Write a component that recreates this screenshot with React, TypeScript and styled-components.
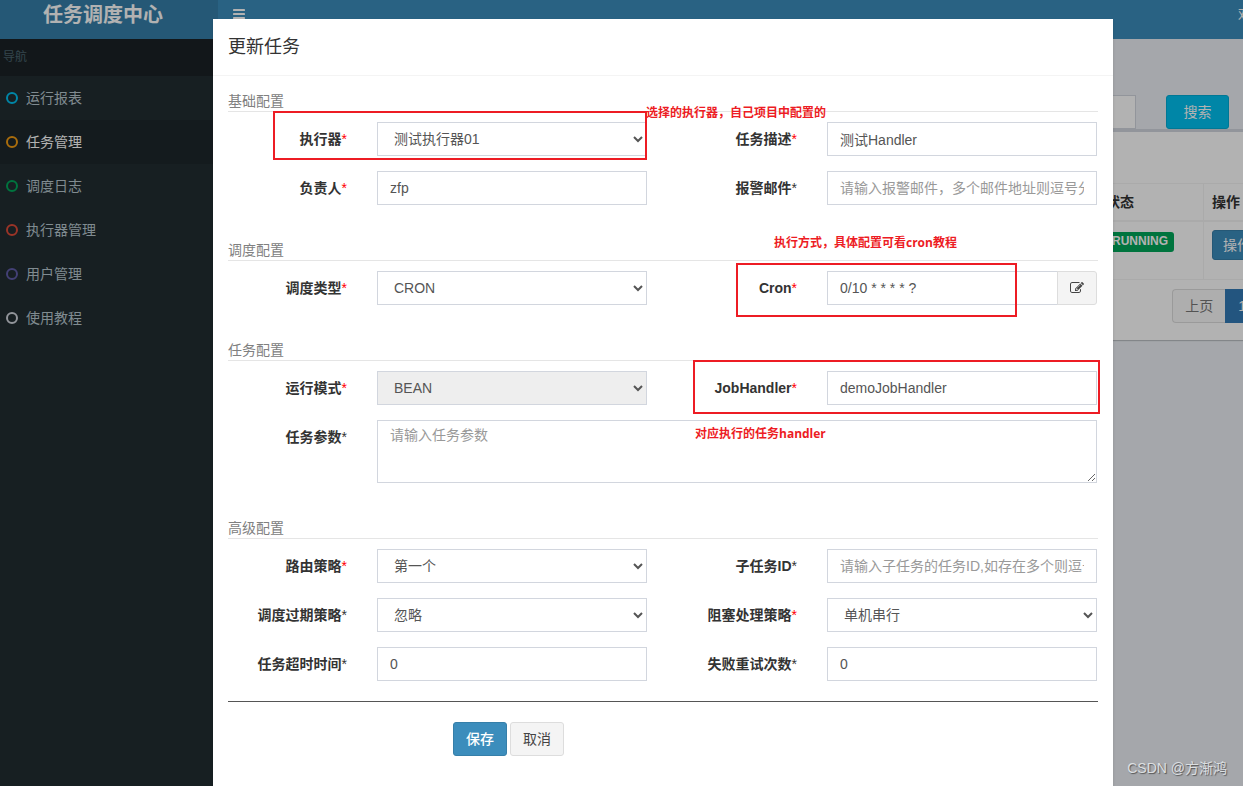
import React from "react";
import styled, { createGlobalStyle } from "styled-components";

const GlobalStyle = createGlobalStyle`
  *, *::before, *::after { box-sizing: border-box; }
  body {
    margin: 0;
    font-family: "Liberation Sans", "Noto Sans CJK SC", sans-serif;
    font-size: 14px;
    line-height: 20px;
    color: #333;
  }
  button, input, select, textarea { font: inherit; margin: 0; }
  a { text-decoration: none; }
`;

/* ---------- page behind the dialog ---------- */

const Viewport = styled.div`
  position: relative;
  height: 100vh;
  overflow: hidden;
`;

const Shell = styled.div`
  display: grid;
  grid-template-columns: 218px 1fr;
  grid-template-rows: 39px 1fr;
  width: calc(100% + 95px);
  height: 100%;
`;

const Logo = styled.a`
  padding-right: 12px;
  background: #367fa9;
  color: #fff;
  font-size: 20px;
  font-weight: 700;
  line-height: 30px;
  text-align: center;
`;

const Topbar = styled.header`
  display: flex;
  align-items: center;
  justify-content: space-between;
  padding: 0 72px 11px 15px;
  background: #3c8dbc;
`;

const Toggle = styled.button`
  display: flex;
  padding: 0;
  border: 0;
  background: none;
  color: #fff;
`;

const UserLink = styled.a`
  color: #fff;
`;

const Sidebar = styled.nav`
  background: #222d32;
`;

const NavHeading = styled.div`
  height: 37px;
  padding: 8px 3px;
  background: #1a2226;
  color: #4b646f;
  font-size: 12px;
`;

const NavLink = styled.a<{ $active?: boolean }>`
  display: flex;
  align-items: center;
  gap: 8px;
  height: 44px;
  padding-left: 6px;
  background: ${(p) => (p.$active ? "#1e282c" : "transparent")};
  color: ${(p) => (p.$active ? "#fff" : "#b8c7ce")};
`;

const Ring = styled.span<{ $color: string }>`
  width: 12px;
  height: 12px;
  border: 2px solid ${(p) => p.$color};
  border-radius: 50%;
`;

const Content = styled.main`
  padding: 56px 15px 0;
  background: #ecf0f5;
`;

const Filters = styled.div`
  display: flex;
  justify-content: flex-end;
  gap: 30px;
  padding-right: 94px;
`;

const FilterInput = styled.input`
  width: 160px;
  height: 34px;
  border: 1px solid #d2d6de;
  background: #fff;
`;

const SearchButton = styled.button`
  width: 63px;
  height: 34px;
  border: 1px solid #00acd6;
  border-radius: 3px;
  background: #00c0ef;
  color: #fff;
`;

const Box = styled.section`
  padding: 51px 10px 17px;
  border-top: 3px solid #d2d6de;
  background: #fff;
  box-shadow: 0 1px 1px rgba(0, 0, 0, 0.2);
`;

const JobTable = styled.table`
  width: 100%;
  table-layout: fixed;
  border-collapse: collapse;

  th, td {
    padding: 8px;
    border: 1px solid #f4f4f4;
    text-align: left;
    vertical-align: top;
  }
  th { height: 37px; border-bottom-width: 2px; color: #333; }
  td { height: 58px; }
`;

const StatusCol = styled.col`
  width: 106px;
`;

const ActionCol = styled.col`
  width: 109px;
`;

const StatusTag = styled.span`
  display: inline-block;
  height: 20px;
  padding: 0 6px;
  margin-top: 2px;
  border-radius: 3px;
  background: #00a65a;
  color: #fff;
  font-size: 12px;
  font-weight: 700;
  line-height: 18px;
`;

const ActionButton = styled.button`
  height: 30px;
  padding: 0 10px;
  border: 1px solid #367fa9;
  border-radius: 3px;
  background: #3c8dbc;
  color: #fff;
`;

const Pager = styled.div`
  display: flex;
  justify-content: flex-end;
  padding: 9px 54px 0 0;
`;

const PageLink = styled.a<{ $current?: boolean }>`
  height: 34px;
  padding: 6px 12px;
  border: 1px solid ${(p) => (p.$current ? "#337ab7" : "#ddd")};
  border-right-width: ${(p) => (p.$current ? "1px" : "0")};
  border-radius: ${(p) => (p.$current ? "0" : "4px 0 0 4px")};
  background: ${(p) => (p.$current ? "#337ab7" : "#fafafa")};
  color: ${(p) => (p.$current ? "#fff" : "#777")};
`;

/* ---------- dialog ---------- */

const Backdrop = styled.div`
  position: absolute;
  inset: 0;
  display: flex;
  justify-content: center;
  padding: 19px 0 0 83px;
  background: rgba(0, 0, 0, 0.3);
`;

const Dialog = styled.div`
  position: relative;
  flex: 0 1 900px;
  background: #fff;
  box-shadow: 0 2px 3px rgba(0, 0, 0, 0.125);
`;

const DialogHeader = styled.header`
  padding: 15px;
  border-bottom: 1px solid #f4f4f4;
`;

const DialogTitle = styled.h4`
  margin: 0;
  font-size: 18px;
  font-weight: 400;
  line-height: 26px;
`;

const Form = styled.form`
  padding: 15px;
`;

const Section = styled.fieldset`
  min-width: 0;
  margin: 0 0 35px;
  padding: 0;
  border: 0;
`;

const SectionTitle = styled.legend`
  width: 100%;
  margin-bottom: 10px;
  padding: 0;
  border-bottom: 1px solid #e5e5e5;
  color: #808080;
`;

const Fields = styled.div`
  display: grid;
  grid-template-columns: 1fr 2fr 1fr 2fr;
  row-gap: 15px;
  margin: 0 -14px 0 -16px;
`;

const Label = styled.label`
  padding: 7px 15px 0;
  font-weight: 700;
  text-align: right;
  white-space: nowrap;
`;

const Star = styled.span<{ $required?: boolean }>`
  color: ${(p) => (p.$required ? "#f00" : "inherit")};
  font-weight: 400;
`;

const Cell = styled.div<{ $wide?: boolean }>`
  display: flex;
  min-width: 0;
  padding: 0 15px;
  grid-column: ${(p) => (p.$wide ? "span 3" : "auto")};
`;

const controlStyle = `
  flex: 1;
  min-width: 0;
  height: 34px;
  padding: 6px 12px;
  border: 1px solid #d2d6de;
  border-radius: 0;
  background: #fff;
  color: #555;
  outline: 0;
`;

const TextInput = styled.input`
  ${controlStyle}
  &::placeholder { color: #999; }
`;

const Select = styled.select`
  ${controlStyle}
  &:disabled { background: #eee; opacity: 1; }
`;

const TextArea = styled.textarea`
  ${controlStyle}
  height: 63px;
  padding: 4px 12px;
  &::placeholder { color: #999; }
`;

const EditButton = styled.button`
  display: flex;
  align-items: center;
  justify-content: center;
  width: 40px;
  margin-left: -1px;
  border: 1px solid #ddd;
  border-radius: 0 3px 3px 0;
  background: #f4f4f4;
  color: #444;
`;

const Divider = styled.hr`
  margin: -15px 0 20px;
  border: 0;
  border-top: 1px solid #555;
`;

const Actions = styled.div`
  display: flex;
  gap: 3px;
  padding-left: 225px;
`;

const Button = styled.button<{ $primary?: boolean }>`
  width: 54px;
  height: 34px;
  padding: 0;
  border: 1px solid ${(p) => (p.$primary ? "#367fa9" : "#ddd")};
  border-radius: 3px;
  background: ${(p) => (p.$primary ? "#3c8dbc" : "#f4f4f4")};
  color: ${(p) => (p.$primary ? "#fff" : "#444")};
  font-weight: ${(p) => (p.$primary ? 500 : 400)};
`;

/* ---------- annotations drawn over the dialog ---------- */

const Frame = styled.div<{ $x: number; $y: number; $w: number; $h: number }>`
  position: absolute;
  left: ${(p) => p.$x}px;
  top: ${(p) => p.$y}px;
  width: ${(p) => p.$w}px;
  height: ${(p) => p.$h}px;
  border: 2px solid #ed1c24;
  pointer-events: none;
`;

const Note = styled.span<{ $x: number; $y: number }>`
  position: absolute;
  left: ${(p) => p.$x}px;
  top: ${(p) => p.$y}px;
  color: #ed1c24;
  font-family: "Open Sans", "Noto Sans CJK SC", sans-serif;
  font-size: 12px;
  font-weight: 700;
  line-height: 16px;
  white-space: nowrap;
  pointer-events: none;
`;

const Watermark = styled.span`
  position: absolute;
  right: 16px;
  bottom: 8px;
  color: #dcdfe1;
  text-shadow: 1px 1px 1px #555;
`;

const navItems = [
  { text: "运行报表", color: "#00c0ef" },
  { text: "任务管理", color: "#f39c12", active: true },
  { text: "调度日志", color: "#00a65a" },
  { text: "执行器管理", color: "#dd4b39" },
  { text: "用户管理", color: "#605ca8" },
  { text: "使用教程", color: "#d2d6de" },
];

type FieldProps = {
  id: string;
  label: string;
  required?: boolean;
  wide?: boolean;
  children: React.ReactNode;
};

function Field({ id, label, required, wide, children }: FieldProps) {
  return (
    <>
      <Label htmlFor={id}>
        {label}
        <Star $required={required}>*</Star>
      </Label>
      <Cell $wide={wide}>{children}</Cell>
    </>
  );
}

function BarsIcon() {
  return (
    <svg width="12" height="10" viewBox="0 0 12 10" fill="currentColor" aria-hidden="true">
      <rect width="12" height="2" rx="0.4" />
      <rect y="4" width="12" height="2" rx="0.4" />
      <rect y="8" width="12" height="2" rx="0.4" />
    </svg>
  );
}

function EditIcon() {
  return (
    <svg width="14" height="14" viewBox="0 0 1792 1792" fill="currentColor" aria-hidden="true">
      <path d="M888 1184l116-116-152-152-116 116v56h96v96h56zm440-720q-16-16-33 1l-350 350q-17 17-1 33t33-1l350-350q17-17 1-33zm80 594v190q0 119-84.5 203.5t-203.5 84.5h-832q-119 0-203.5-84.5t-84.5-203.5v-832q0-119 84.5-203.5t203.5-84.5h832q63 0 117 25 15 7 18 23 3 17-9 29l-49 49q-14 14-32 8-23-6-45-6h-832q-66 0-113 47t-47 113v832q0 66 47 113t113 47h832q66 0 113-47t47-113v-126q0-13 9-22l64-64q15-15 35-7t20 29zm-96-738l288 288-672 672h-288v-288zm444 132l-92 92-288-288 92-92q28-28 68-28t68 28l152 152q28 28 28 68t-28 68z" />
    </svg>
  );
}

export default function App() {
  return (
    <Viewport>
      <GlobalStyle />
      <Shell>
        <Logo href="#">任务调度中心</Logo>
        <Topbar>
          <Toggle type="button" aria-label="导航">
            <BarsIcon />
          </Toggle>
          <UserLink href="#">欢迎</UserLink>
        </Topbar>
        <Sidebar>
          <NavHeading>导航</NavHeading>
          {navItems.map((item) => (
            <NavLink key={item.text} href="#" $active={item.active}>
              <Ring $color={item.color} />
              {item.text}
            </NavLink>
          ))}
        </Sidebar>
        <Content>
          <Filters>
            <FilterInput type="text" aria-label="搜索" />
            <SearchButton type="button">搜索</SearchButton>
          </Filters>
          <Box>
            <JobTable>
              <colgroup>
                <col />
                <StatusCol />
                <ActionCol />
              </colgroup>
              <thead>
                <tr>
                  <th />
                  <th>状态</th>
                  <th>操作</th>
                </tr>
              </thead>
              <tbody>
                <tr>
                  <td />
                  <td>
                    <StatusTag>RUNNING</StatusTag>
                  </td>
                  <td>
                    <ActionButton type="button">操作</ActionButton>
                  </td>
                </tr>
              </tbody>
            </JobTable>
            <Pager>
              <PageLink href="#">上页</PageLink>
              <PageLink href="#" $current>
                1
              </PageLink>
            </Pager>
          </Box>
        </Content>
      </Shell>

      <Backdrop>
        <Dialog role="dialog" aria-labelledby="dialog-title">
          <DialogHeader>
            <DialogTitle id="dialog-title">更新任务</DialogTitle>
          </DialogHeader>
          <Form>
            <Section>
              <SectionTitle>基础配置</SectionTitle>
              <Fields>
                <Field id="group" label="执行器" required>
                  <Select id="group">
                    <option>测试执行器01</option>
                  </Select>
                </Field>
                <Field id="desc" label="任务描述" required>
                  <TextInput id="desc" defaultValue="测试Handler" />
                </Field>
                <Field id="author" label="负责人" required>
                  <TextInput id="author" defaultValue="zfp" />
                </Field>
                <Field id="email" label="报警邮件">
                  <TextInput id="email" placeholder="请输入报警邮件，多个邮件地址则逗号分隔" />
                </Field>
              </Fields>
            </Section>

            <Section>
              <SectionTitle>调度配置</SectionTitle>
              <Fields>
                <Field id="schedule" label="调度类型" required>
                  <Select id="schedule">
                    <option>CRON</option>
                  </Select>
                </Field>
                <Field id="cron" label="Cron" required>
                  <TextInput id="cron" defaultValue="0/10 * * * * ?" />
                  <EditButton type="button" aria-label="Cron">
                    <EditIcon />
                  </EditButton>
                </Field>
              </Fields>
            </Section>

            <Section>
              <SectionTitle>任务配置</SectionTitle>
              <Fields>
                <Field id="mode" label="运行模式" required>
                  <Select id="mode" disabled>
                    <option>BEAN</option>
                  </Select>
                </Field>
                <Field id="handler" label="JobHandler" required>
                  <TextInput id="handler" defaultValue="demoJobHandler" />
                </Field>
                <Field id="param" label="任务参数" wide>
                  <TextArea id="param" placeholder="请输入任务参数" />
                </Field>
              </Fields>
            </Section>

            <Section>
              <SectionTitle>高级配置</SectionTitle>
              <Fields>
                <Field id="route" label="路由策略" required>
                  <Select id="route">
                    <option>第一个</option>
                  </Select>
                </Field>
                <Field id="child" label="子任务ID">
                  <TextInput id="child" placeholder="请输入子任务的任务ID,如存在多个则逗号分隔" />
                </Field>
                <Field id="misfire" label="调度过期策略">
                  <Select id="misfire">
                    <option>忽略</option>
                  </Select>
                </Field>
                <Field id="block" label="阻塞处理策略" required>
                  <Select id="block">
                    <option>单机串行</option>
                  </Select>
                </Field>
                <Field id="timeout" label="任务超时时间">
                  <TextInput id="timeout" defaultValue="0" />
                </Field>
                <Field id="retry" label="失败重试次数">
                  <TextInput id="retry" defaultValue="0" />
                </Field>
              </Fields>
            </Section>

            <Divider />
            <Actions>
              <Button type="submit" $primary>
                保存
              </Button>
              <Button type="button">取消</Button>
            </Actions>
          </Form>

          <Frame $x={60} $y={92} $w={374} $h={49} />
          <Note $x={433} $y={86}>选择的执行器，自己项目中配置的</Note>
          <Frame $x={523} $y={244} $w={281} $h={54} />
          <Note $x={561} $y={216}>执行方式，具体配置可看cron教程</Note>
          <Frame $x={480} $y={341} $w={407} $h={54} />
          <Note $x={482} $y={407}>对应执行的任务handler</Note>
        </Dialog>
      </Backdrop>
      <Watermark>CSDN @方渐鸿</Watermark>
    </Viewport>
  );
}
